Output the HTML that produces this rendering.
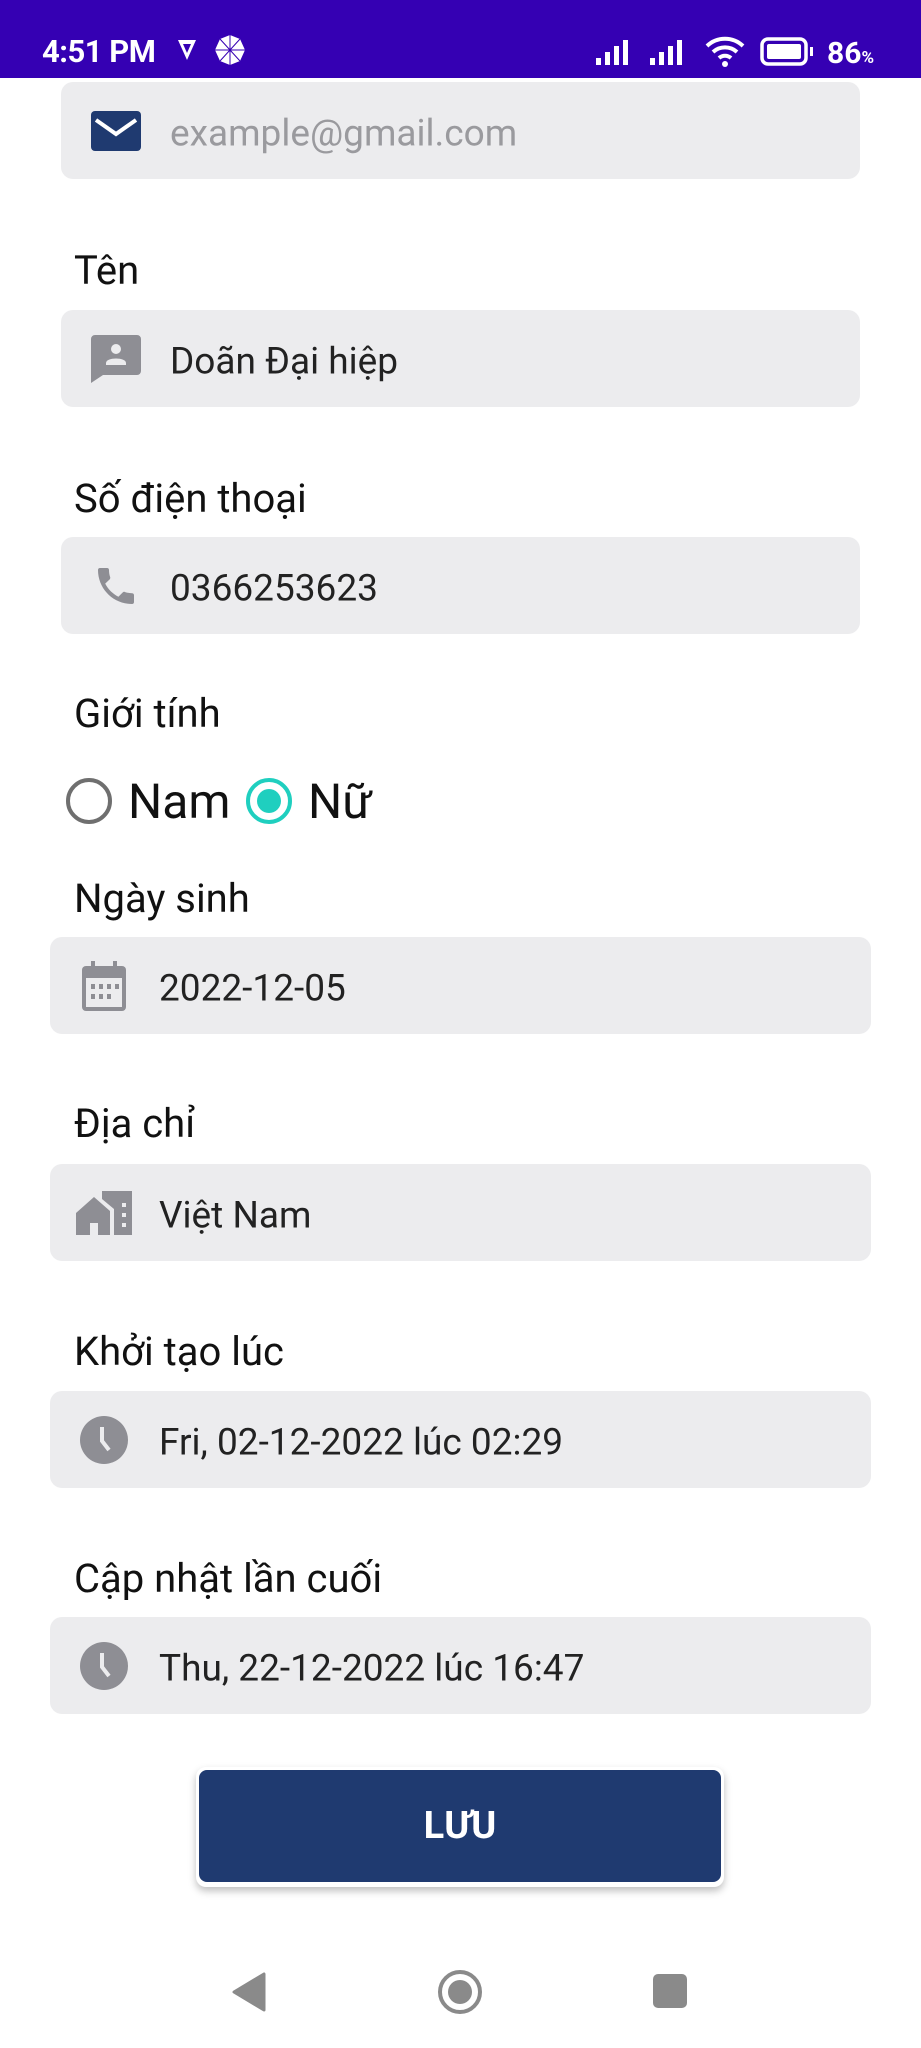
<!DOCTYPE html>
<html><head><meta charset="utf-8"><style>
*{margin:0;padding:0;box-sizing:border-box}
body{width:921px;height:2048px;background:#fff;position:relative;overflow:hidden;font-family:"Roboto","Liberation Sans","DejaVu Sans",sans-serif}
.sb{position:absolute;left:0;top:0;width:921px;height:78px;background:#3500b3;color:#fff}
.lbl{position:absolute;left:74px;font-size:40px;color:#111;line-height:1}
.box{position:absolute;background:#ececee;border-radius:12px;height:97px}
.box .t{position:absolute;top:calc(50% + 3px);transform:translateY(-50%);font-size:37px;color:#222;white-space:nowrap}
.box svg{position:absolute;top:50%;transform:translateY(-50%)}
.a{left:61px;width:799px}
.b{left:50px;width:821px}
</style></head><body>
<div class="sb">
 <div style="position:absolute;left:42px;top:33px;font-size:31px;font-weight:bold;letter-spacing:-0.5px">4:51 PM</div>
 <svg style="position:absolute;left:176px;top:38px" width="22" height="24" viewBox="0 0 22 24"><path d="M2 2h18l-9 20z" fill="#fff"/><path d="M7 6h8l-4 9z" fill="#3500b3"/></svg>
 <svg style="position:absolute;left:214px;top:34px" width="32" height="32" viewBox="0 0 32 32"><polygon points="16,1 26,5 31,16 26,27 16,31 6,27 1,16 6,5" fill="#fff"/><g stroke="#3500b3" stroke-width="1"><line x1="16" y1="1" x2="16" y2="31"/><line x1="1" y1="16" x2="31" y2="16"/><line x1="6" y1="5" x2="26" y2="27"/><line x1="26" y1="5" x2="6" y2="27"/></g></svg>
 <svg style="position:absolute;left:596px;top:38px" width="42" height="28"><rect x="0" y="20" width="5" height="7" fill="#fff"/><rect x="9" y="14" width="5" height="13" fill="#fff"/><rect x="18" y="8" width="5" height="19" fill="#fff"/><rect x="27" y="2" width="5" height="25" fill="#fff"/></svg>
 <svg style="position:absolute;left:650px;top:38px" width="42" height="28"><rect x="0" y="20" width="5" height="7" fill="#fff"/><rect x="9" y="14" width="5" height="13" fill="#fff"/><rect x="18" y="8" width="5" height="19" fill="#fff"/><rect x="27" y="2" width="5" height="25" fill="#fff"/></svg>
 <svg style="position:absolute;left:705px;top:36px" width="44" height="32" viewBox="0 0 44 32"><path d="M2 10a26 26 0 0 1 36 0" stroke="#fff" stroke-width="4" fill="none"/><path d="M8 16a18 18 0 0 1 24 0" stroke="#fff" stroke-width="4" fill="none"/><path d="M14 22a9 9 0 0 1 12 0" stroke="#fff" stroke-width="4" fill="none"/><circle cx="20" cy="28" r="3" fill="#fff"/></svg>
 <svg style="position:absolute;left:760px;top:37px" width="56" height="30"><rect x="2" y="2" width="44" height="25" rx="6" stroke="#fff" stroke-width="3.5" fill="none"/><rect x="7" y="7" width="34" height="15" rx="2" fill="#fff"/><rect x="50" y="10" width="3" height="9" fill="#fff"/></svg>
 <div style="position:absolute;left:827px;top:36px;font-size:30px;font-weight:bold">86<span style="font-size:17px">%</span></div>
</div>

<div class="box a" style="top:82px"><svg style="left:30px" width="50" height="40" viewBox="0 0 50 40"><rect width="50" height="40" rx="4" fill="#1f3a70"/><path d="M5 9l20 14 20-14" stroke="#fff" stroke-width="4" fill="none"/></svg><div class="t" style="left:109px;color:#9a9a9e">example@gmail.com</div></div>

<div class="lbl" style="top:251px">Tên</div>
<div class="box a" style="top:310px"><svg style="left:30px" width="50" height="48" viewBox="0 0 50 48"><path d="M4 0h42a4 4 0 0 1 4 4v32a4 4 0 0 1-4 4H12L0 48V4a4 4 0 0 1 4-4z" fill="#8e8e94"/><circle cx="25" cy="14" r="5" fill="#ececee"/><path d="M15 28c0-6 20-6 20 0v2H15z" fill="#ececee"/></svg><div class="t" style="left:109px">Doãn Đại hiệp</div></div>

<div class="lbl" style="top:479px">Số điện thoại</div>
<div class="box a" style="top:537px"><svg style="left:31px" width="48" height="48" viewBox="0 0 24 24"><path fill="#8e8e94" d="M6.6 10.8c1.4 2.8 3.8 5.1 6.6 6.6l2.2-2.2c.3-.3.7-.4 1-.2 1.1.4 2.3.6 3.6.6.6 0 1 .4 1 1V20c0 .6-.4 1-1 1C10.6 21 3 13.4 3 4c0-.6.4-1 1-1h3.5c.6 0 1 .4 1 1 0 1.3.2 2.5.6 3.6.1.3 0 .7-.2 1z"/></svg><div class="t" style="left:109px">0366253623</div></div>

<div class="lbl" style="top:694px">Giới tính</div>
<svg style="position:absolute;left:64px;top:776px" width="50" height="50"><circle cx="25" cy="25" r="21" stroke="#6f6f6f" stroke-width="4" fill="none"/></svg>
<div style="position:absolute;left:128px;top:773px;font-size:48px;color:#111">Nam</div>
<svg style="position:absolute;left:244px;top:776px" width="50" height="50"><circle cx="25" cy="25" r="21" stroke="#1fcfbf" stroke-width="4" fill="none"/><circle cx="25" cy="25" r="12" fill="#1fcfbf"/></svg>
<div style="position:absolute;left:308px;top:773px;font-size:48px;color:#111">Nữ</div>

<div class="lbl" style="top:879px">Ngày sinh</div>
<div class="box b" style="top:937px"><svg style="left:32px" width="44" height="50" viewBox="0 0 44 50"><rect x="0" y="5" width="44" height="45" rx="4" fill="#8e8e94"/><rect x="9" y="0" width="4" height="10" fill="#8e8e94"/><rect x="31" y="0" width="4" height="10" fill="#8e8e94"/><rect x="4" y="17" width="36" height="29" fill="#ececee"/><g fill="#8e8e94"><rect x="9" y="23" width="4" height="5"/><rect x="17" y="23" width="4" height="5"/><rect x="25" y="23" width="4" height="5"/><rect x="33" y="23" width="4" height="5"/><rect x="9" y="33" width="4" height="5"/><rect x="17" y="33" width="4" height="5"/><rect x="25" y="33" width="4" height="5"/></g></svg><div class="t" style="left:109px">2022-12-05</div></div>

<div class="lbl" style="top:1104px">Địa chỉ</div>
<div class="box b" style="top:1164px"><svg style="left:26px" width="56" height="44" viewBox="0 0 56 44"><path d="M0 22L18 6l16 14v24H22V32h-8v12H0z" fill="#8e8e94"/><path d="M26 0h30v44H38V18L26 8z" fill="#8e8e94"/><g fill="#ececee"><rect x="46" y="12" width="4" height="4"/><rect x="46" y="22" width="4" height="4"/><rect x="46" y="32" width="4" height="4"/></g></svg><div class="t" style="left:109px">Việt Nam</div></div>

<div class="lbl" style="top:1332px">Khởi tạo lúc</div>
<div class="box b" style="top:1391px"><svg style="left:29px" width="50" height="50" viewBox="0 0 50 50"><circle cx="25" cy="25" r="24" fill="#8e8e94"/><path d="M23 12v14l7 9" stroke="#ececee" stroke-width="4" fill="none"/></svg><div class="t" style="left:109px">Fri, 02-12-2022 lúc 02:29</div></div>

<div class="lbl" style="top:1559px">Cập nhật lần cuối</div>
<div class="box b" style="top:1617px"><svg style="left:29px" width="50" height="50" viewBox="0 0 50 50"><circle cx="25" cy="25" r="24" fill="#8e8e94"/><path d="M23 12v14l7 9" stroke="#ececee" stroke-width="4" fill="none"/></svg><div class="t" style="left:109px">Thu, 22-12-2022 lúc 16:47</div></div>

<div style="position:absolute;left:196px;top:1767px;width:528px;height:120px;border-radius:10px;background:#fff;box-shadow:0 4px 8px rgba(0,0,0,0.25)"></div>
<div style="position:absolute;left:199px;top:1770px;width:522px;height:112px;border-radius:8px;background:#1f3a70;color:#fff;font-weight:bold;font-size:38px;text-align:center;line-height:112px">LƯU</div>

<svg style="position:absolute;left:232px;top:1972px" width="34" height="40"><path d="M32 2v36L2 20z" fill="#8a8a8a" stroke="#8a8a8a" stroke-width="3" stroke-linejoin="round"/></svg>
<svg style="position:absolute;left:436px;top:1968px" width="48" height="48"><circle cx="24" cy="24" r="20" stroke="#8a8a8a" stroke-width="4" fill="none"/><circle cx="24" cy="24" r="12" fill="#8a8a8a"/></svg>
<div style="position:absolute;left:653px;top:1974px;width:34px;height:34px;border-radius:5px;background:#8a8a8a"></div>
</body></html>
